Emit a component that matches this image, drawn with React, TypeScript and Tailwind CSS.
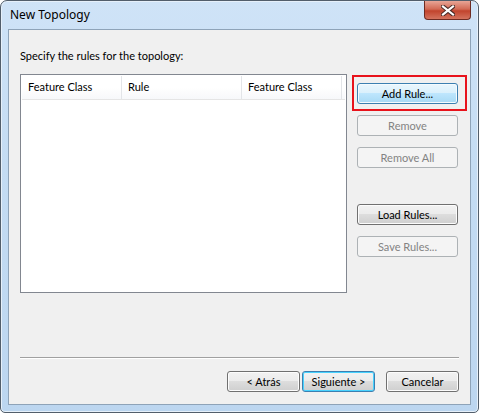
const btnBase =
  "h-[21px] rounded-[3px] border text-[11px] leading-none flex items-center justify-center";

const normalBtn =
  "border-[#707070] bg-[linear-gradient(#f2f2f2_0%,#ebebeb_50%,#dddddd_50%,#cfcfcf_100%)] text-black shadow-[inset_0_0_0_1px_#fcfcfc]";

const disabledBtn = "border-[#adb2b5] bg-[#f4f4f4] text-[#838383]";

const hotBtn =
  "border-[#3c7fb1] bg-[linear-gradient(#eaf6fd_0%,#d9f0fc_50%,#bee6fd_50%,#a7d9f5_100%)] text-black shadow-[inset_0_0_0_1px_#f4fbfe]";

const defaultBtn =
  "border-[#3c7fb1] bg-[linear-gradient(#f2f2f2_0%,#ebebeb_50%,#dddddd_50%,#cfcfcf_100%)] text-black shadow-[inset_0_0_0_1px_#48d2fe]";

const App = () => {
  return (
    <div className="w-[479px] h-[414px] bg-white font-['Lato',sans-serif]">
      <div className="w-[479px] h-[413px] rounded-t-[7px] rounded-b-[5px] border border-[#525e6b] bg-[linear-gradient(180deg,#cfe3f7_0%,#c4dcf3_40%,#bcd6f0_100%)] shadow-[inset_0_0_0_1px_#e6f0fa] flex flex-col">
        <div className="h-[28px] flex items-start justify-between">
          <div className="pl-[9px] pt-[6px] font-['Noto_Sans',sans-serif] text-[12px] leading-[16px] text-black">
            New Topology
          </div>
          <div className="mr-[7px] w-[47px] h-[19px] rounded-b-[4px] border border-t-0 border-[#6e2b22] bg-[linear-gradient(#e8a596_0%,#d26a55_45%,#c2442d_55%,#d4735e_100%)] flex items-center justify-center">
            <svg width="14" height="11" viewBox="0 0 14 11">
              <path
                d="M2 1.5 L12 9.5 M12 1.5 L2 9.5"
                stroke="#4a2a26"
                strokeWidth="4.2"
                strokeLinecap="square"
              />
              <path
                d="M2 1.5 L12 9.5 M12 1.5 L2 9.5"
                stroke="#ffffff"
                strokeWidth="2.2"
                strokeLinecap="square"
              />
            </svg>
          </div>
        </div>

        <div className="mx-[7px] h-[376px] border border-[#8ea3b8] bg-[#f0f0f0] flex flex-col px-[11px]">
          <div className="mt-[19px] text-[11px] leading-[14px] text-black">
            Specify the rules for the topology:
          </div>

          <div className="mt-[11px] flex">
            <div className="w-[327px] h-[219px] border border-[#828790] bg-white p-px flex flex-col">
              <div className="h-[24px] flex border-b border-[#e5e5e5] bg-[linear-gradient(#ffffff_0%,#ffffff_50%,#f7f8fa_100%)] text-[11px] text-black">
                <div className="w-[100px] border-r border-[#e3e5e8] pl-[6px] flex items-center">Feature Class</div>
                <div className="w-[120px] border-r border-[#e3e5e8] pl-[6px] flex items-center">Rule</div>
                <div className="w-[100px] border-r border-[#e3e5e8] pl-[6px] flex items-center">Feature Class</div>
                <div className="flex-1" />
              </div>
            </div>

            <div className="relative ml-[10px] pt-[9px] flex flex-col">
              <div className="absolute left-[-5px] top-[1px] w-[115px] h-[36px] border-2 border-[#e8121b]" />
              <button className={`${btnBase} w-[101px] ${hotBtn}`}>Add Rule...</button>
              <button className={`${btnBase} w-[101px] ${disabledBtn} mt-[11px]`}>Remove</button>
              <button className={`${btnBase} w-[101px] ${disabledBtn} mt-[11px]`}>Remove All</button>
              <button className={`${btnBase} w-[101px] ${normalBtn} mt-[36px]`}>Load Rules...</button>
              <button className={`${btnBase} w-[101px] ${disabledBtn} mt-[11px]`}>Save Rules...</button>
            </div>
          </div>

          <div className="mt-[64px] w-[439px] h-[2px] border-t border-[#a0a0a0] border-b border-b-white" />

          <div className="mt-[12px] flex w-[439px]">
            <div className="flex-1" />
            <button className={`${btnBase} w-[73px] ${normalBtn}`}>&lt; Atrás</button>
            <button className={`${btnBase} w-[73px] ml-[2px] ${defaultBtn}`}>Siguiente &gt;</button>
            <button className={`${btnBase} w-[73px] ml-[11px] ${normalBtn}`}>Cancelar</button>
          </div>
        </div>
      </div>
    </div>
  );
};

export default App;
